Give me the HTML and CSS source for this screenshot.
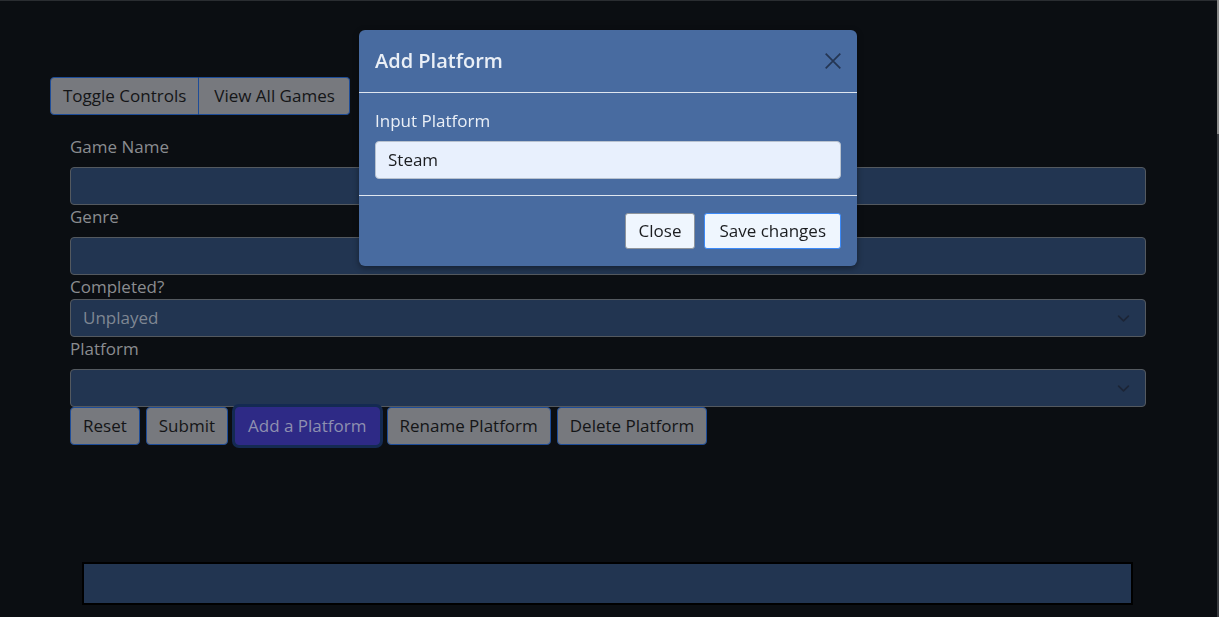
FILE: index.html
```html
<!DOCTYPE html>
<html>
<head>
<meta charset="utf-8">
<link rel="stylesheet" href="styles.css">
</head>
<body>
<div class="page">
  <div class="btn-group">
    <button class="btn btn-dim">Toggle Controls</button>
    <button class="btn btn-dim btn-wide">View All Games</button>
  </div>
  <form class="game-form">
    <label class="label">Game Name</label>
    <div class="field"></div>
    <label class="label">Genre</label>
    <div class="field"></div>
    <label class="label label-tight">Completed?</label>
    <div class="field select"><span class="select-text">Unplayed</span><svg class="chev" viewBox="0 0 16 16"><path d="M2 5l6 6 6-6" fill="none" stroke="#1c2536" stroke-width="2" stroke-linecap="round" stroke-linejoin="round"/></svg></div>
    <label class="label">Platform</label>
    <div class="field select"><span class="select-text"></span><svg class="chev" viewBox="0 0 16 16"><path d="M2 5l6 6 6-6" fill="none" stroke="#1c2536" stroke-width="2" stroke-linecap="round" stroke-linejoin="round"/></svg></div>
    <div class="actions">
      <button type="button" class="btn btn-dim btn-sep">Reset</button>
      <button type="button" class="btn btn-dim btn-sep">Submit</button>
      <button type="button" class="btn btn-add">Add a Platform</button>
      <button type="button" class="btn btn-dim btn-sep">Rename Platform</button>
      <button type="button" class="btn btn-dim btn-sep">Delete Platform</button>
    </div>
  </form>
  <div class="bottom-box"></div>
</div>

<div class="scrollbar"><div class="thumb"></div></div>

<div class="modal">
  <div class="modal-header">
    <h5 class="modal-title">Add Platform</h5>
    <svg class="btn-close" viewBox="0 0 16 16"><path d="M1.5 1.5l13 13M14.5 1.5l-13 13" stroke="#243552" stroke-width="1.5" fill="none"/></svg>
  </div>
  <div class="modal-body">
    <label class="modal-label">Input Platform</label>
    <div class="modal-input">Steam</div>
  </div>
  <div class="modal-footer">
    <button class="mbtn mbtn-close">Close</button>
    <button class="mbtn mbtn-save">Save changes</button>
  </div>
</div>
</body>
</html>
```
FILE: styles.css
```css
html { border-top: 1px solid #2a2d31; }
body {
  margin: 0;
  background: #0b0e12;
  font-family: "Open Sans", "Noto Sans", sans-serif;
  font-size: 17px;
  line-height: 24px;
  color: #8a8c90;
  overflow: hidden;
}
.page {
  padding: 76px 0 0 50px;
}
.btn-group {
  display: flex;
}
.btn {
  font-family: inherit;
  font-size: 17px;
  line-height: 24px;
  padding: 6px 12px;
  margin: 0;
  cursor: pointer;
}
.btn-wide { padding: 6px 14px 6px 15px; }
.btn-dim {
  background: #77797e;
  color: #141517;
  border: 1px solid #1d4c98;
}
.btn-group .btn:first-child { border-radius: 4px 0 0 4px; }
.btn-group .btn:last-child { border-radius: 0 4px 4px 0; border-left: 0; }
.game-form {
  margin: 20px 0 0 20px;
  width: 1076px;
  display: flex;
  flex-direction: column;
}
.label {
  display: block;
  margin-bottom: 8px;
  color: #8a8c90;
}
.label-tight { margin-bottom: 0; }
.field {
  height: 38px;
  box-sizing: border-box;
  background: #223551;
  border: 1px solid #54595f;
  border-radius: 4px;
}
.select {
  display: flex;
  align-items: center;
  justify-content: space-between;
  padding: 0 12px;
}
.select-text { color: #7f8793; }
.chev { width: 13px; height: 13px; margin-right: 3px; }
.actions {
  display: flex;
  gap: 6px;
}
.btn-sep { border-radius: 4px; }
.btn-add {
  background: #2e2a86;
  color: #8e90b0;
  border: 1px solid #2e2a86;
  border-radius: 4px;
  box-shadow: 0 0 0 3px #142a52;
  margin: 0 1px;
}
.bottom-box {
  margin: 117px 0 0 32px;
  width: 1051px;
  height: 43px;
  box-sizing: border-box;
  background: #223551;
  border: 2px solid #000;
}
.scrollbar {
  position: fixed;
  top: 0;
  right: 0;
  width: 2px;
  height: 100%;
  background: #3a3c40;
}
.thumb {
  height: 134px;
  background: #8a8a8a;
}
.modal {
  position: fixed;
  left: 359px;
  top: 30px;
  width: 498px;
  background: #486ba0;
  border-radius: 6px;
  box-shadow: 0 2px 6px rgba(0,0,0,.4);
}
.modal-header {
  display: flex;
  align-items: center;
  justify-content: space-between;
  padding: 16px;
  border-bottom: 1px solid #dfe6f0;
}
.modal-title {
  margin: 0;
  font-size: 20px;
  font-weight: 600;
  line-height: 30px;
  color: #eaeff6;
}
.btn-close { width: 18px; height: 18px; margin-right: -1px; }
.modal-body {
  padding: 16px;
  border-bottom: 1px solid #dfe6f0;
}
.modal-label {
  display: block;
  margin-bottom: 8px;
  color: #eaeff6;
}
.modal-input {
  height: 38px;
  box-sizing: border-box;
  padding: 6px 12px;
  background: #e8f0fd;
  border: 1px solid #b8c2cf;
  border-radius: 4px;
  color: #1b1d20;
}
.modal-footer {
  display: flex;
  justify-content: flex-end;
  gap: 9px;
  padding: 17px 16px 17px;
}
.mbtn {
  font-family: inherit;
  font-size: 17px;
  line-height: 24px;
  padding: 5px 13px;
  margin: 0;
  border-radius: 3px;
  background: #eff6fe;
  color: #1b1d20;
}
.mbtn-close { border: 1px solid #8f959c; }
.mbtn-save { border: 1px solid #3b8af9; padding: 5px 14px; }
```
